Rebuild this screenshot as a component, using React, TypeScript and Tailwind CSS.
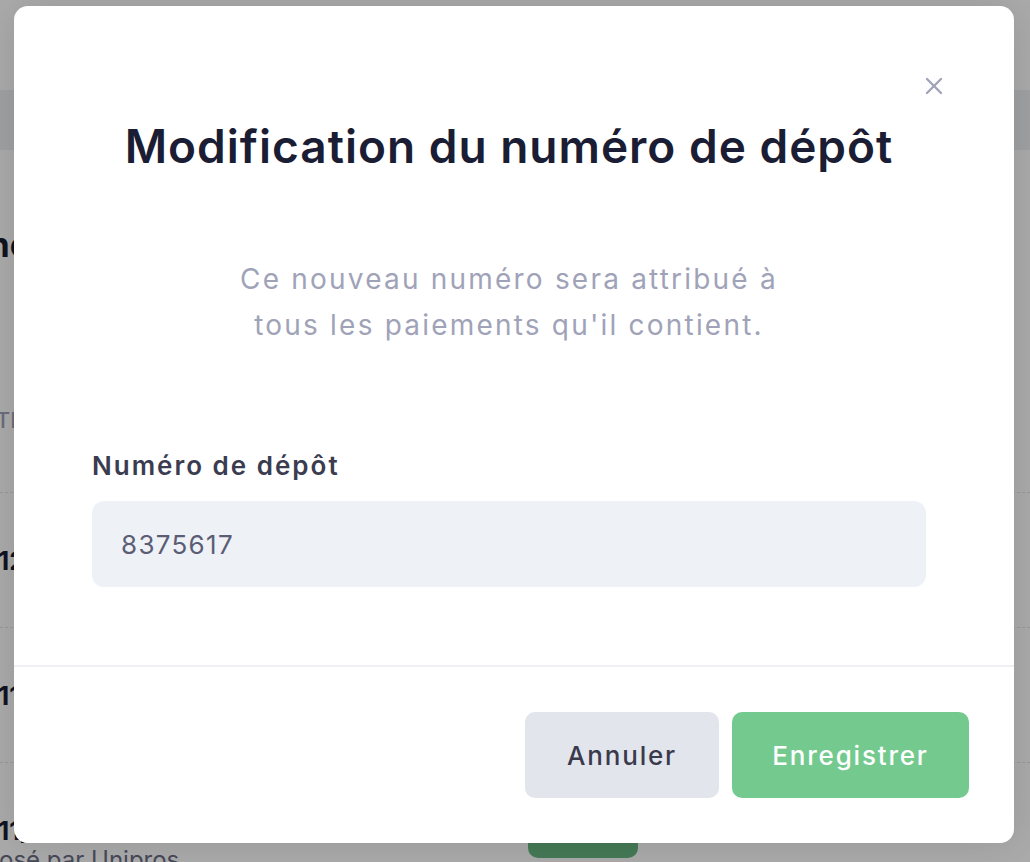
import { X } from "lucide-react";

const font = { fontFamily: "Inter, 'Noto Sans', sans-serif" };

function PageBehind() {
    return (
        <div className="flex h-full w-full flex-col bg-white">
            <div className="h-[90px] shrink-0 bg-white"></div>
            <div className="h-[60px] shrink-0 bg-[#eff0f2]"></div>
            <div className="shrink-0 pt-[75px]">
                <h2 className="-ml-[114px] text-[34px] font-bold leading-[40px] text-[#1a1d33]">Semaine</h2>
            </div>
            <div className="shrink-0 pt-[141px]">
                <span className="-ml-[33px] block text-[22px] font-medium uppercase leading-[28px] text-[#a0a3b8]">Date</span>
            </div>
            <div className="mt-[58px] flex h-[135px] shrink-0 items-center border-t border-dashed border-[#e2e4ea]">
                <span className="-ml-[2px] text-[26px] font-bold text-[#1a1d33]">12/03</span>
            </div>
            <div className="flex h-[135px] shrink-0 items-center border-t border-dashed border-[#e2e4ea]">
                <span className="-ml-[2px] text-[26px] font-bold text-[#1a1d33]">11/03</span>
            </div>
            <div className="flex h-[135px] shrink-0 border-t border-dashed border-[#e2e4ea] pt-[51px]">
                <div className="flex w-[528px] shrink-0 flex-col">
                    <span className="-ml-[2px] text-[26px] font-bold leading-[34px] text-[#1a1d33]">11/03</span>
                    <span className="-ml-[54px] text-[24px] leading-[24px] text-[#6b6e85]">Proposé par Unipros</span>
                </div>
                <div className="mt-[4px] h-[40px] w-[110px] shrink-0 rounded-[10px] bg-[#68b67f]"></div>
            </div>
        </div>
    );
}

export default function App() {
    return (
        <div className="relative h-[862px] w-full overflow-hidden" style={font}>
            <PageBehind />
            <div className="absolute inset-0 bg-black/[0.33]"></div>

            <div className="absolute left-[14px] top-[6px] flex h-[837px] w-[1000px] flex-col rounded-[14px] bg-white shadow-[0_0_40px_rgba(0,0,0,0.12)]">
                <button className="absolute right-[66px] top-[66px] text-[#a0a3b8]">
                    <X size={28} strokeWidth={2} />
                </button>

                <div className="flex flex-col pl-[78px] pr-[88px]">
                    <h1 className="pt-[115px] text-center text-[46px] font-semibold leading-[50px] tracking-[1px] text-[#1a1d33]">
                        Modification du numéro de dépôt
                    </h1>
                    <p className="pt-[85px] text-center text-[28px] leading-[46px] tracking-[2.2px] text-[#a0a3b8]">
                        Ce nouveau numéro sera attribué à
                        <br />
                        tous les paiements qu'il contient.
                    </p>
                    <label className="pt-[102px] text-[26px] font-semibold leading-[32px] tracking-[2px] text-[#3b3c50]">
                        Numéro de dépôt
                    </label>
                    <div className="mt-[19px] flex h-[86px] items-center rounded-[12px] bg-[#eef1f6] px-[29px] text-[26px] tracking-[1.3px] text-[#5b5d75]">
                        8375617
                    </div>
                </div>

                <div className="mt-[78px] border-t-2 border-[#eef0f4]"></div>

                <div className="flex justify-end gap-[13px] pr-[45px] pt-[45px]">
                    <button className="h-[86px] w-[194px] rounded-[10px] bg-[#e2e5ec] text-[26px] font-medium tracking-[1.8px] text-[#3a3a4d]">
                        Annuler
                    </button>
                    <button className="h-[86px] w-[237px] rounded-[10px] bg-[#74ca8e] text-[26px] font-medium tracking-[1.8px] text-white">
                        Enregistrer
                    </button>
                </div>
            </div>
        </div>
    );
}
